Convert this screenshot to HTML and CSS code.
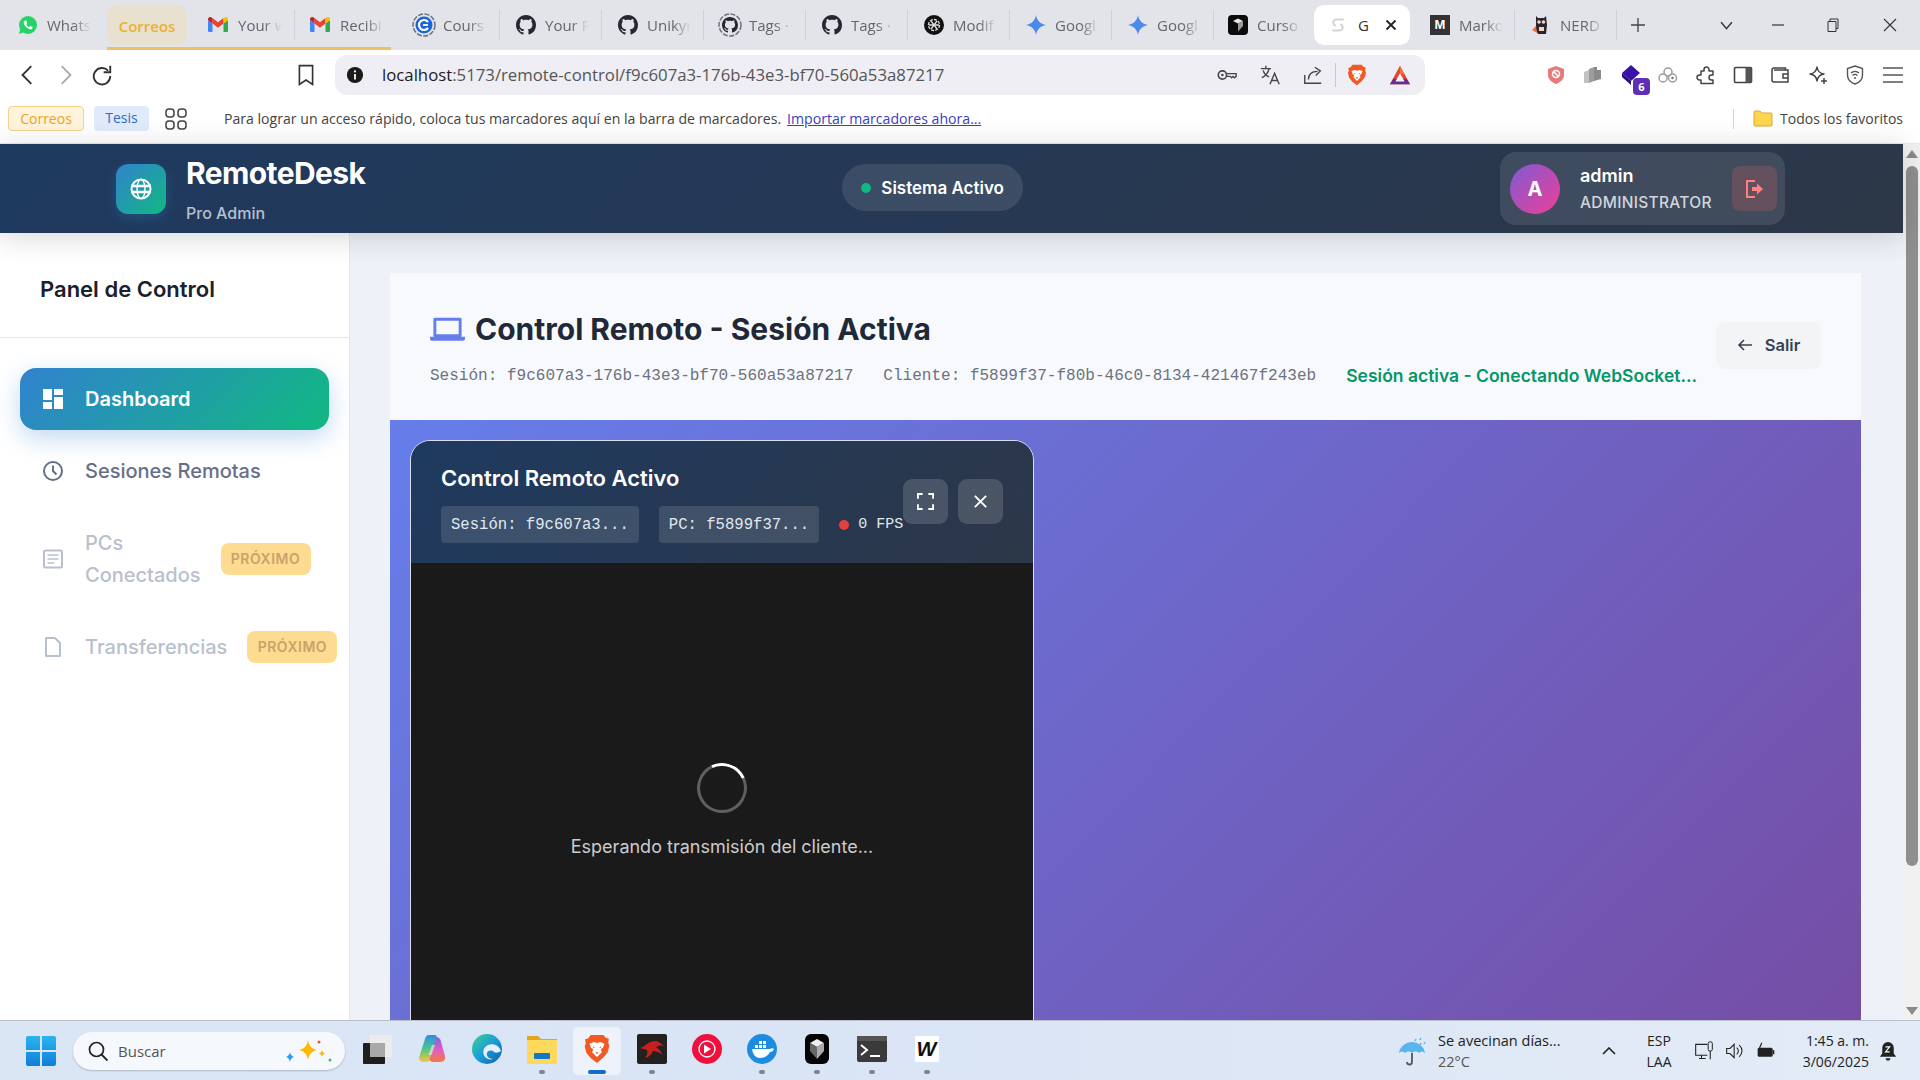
FILE: index.html
```html
<!DOCTYPE html>
<html lang="es">
<head>
  <meta charset="UTF-8" />
  <title>RemoteDesk</title>
  <link rel="stylesheet" href="styles.css">
</head>
<body>
  <svg class="sprite" aria-hidden="true">
    <symbol id="gh" viewBox="0 0 16 16"><path fill="#24292f" d="M8 0C3.58 0 0 3.58 0 8c0 3.54 2.29 6.53 5.47 7.59.4.07.55-.17.55-.38 0-.19-.01-.82-.01-1.49-2.01.37-2.53-.49-2.69-.94-.09-.23-.48-.94-.82-1.13-.28-.15-.68-.52-.01-.53.63-.01 1.08.58 1.23.82.72 1.21 1.87.87 2.33.66.07-.52.28-.87.51-1.07-1.78-.2-3.64-.89-3.64-3.95 0-.87.31-1.59.82-2.15-.08-.2-.36-1.02.08-2.12 0 0 .67-.21 2.2.82.64-.18 1.32-.27 2-.27.68 0 1.36.09 2 .27 1.53-1.04 2.2-.82 2.2-.82.44 1.1.16 1.92.08 2.12.51.56.82 1.27.82 2.15 0 3.07-1.87 3.75-3.65 3.95.29.25.54.73.54 1.48 0 1.07-.01 1.93-.01 2.2 0 .21.15.46.55.38A8.013 8.013 0 0016 8c0-4.42-3.58-8-8-8z"/></symbol>
    <symbol id="gmail" viewBox="0 0 20 16"><path fill="#4285f4" d="M1 15h3.5V6.5L0 3v10.5C0 14.3.5 15 1 15z"/><path fill="#34a853" d="M15.5 15H19c.6 0 1-.7 1-1.5V3l-4.500 3.500z"/><path fill="#ea4335" d="M4.500 6.500 10 10.700l5.500-4.200V1L10 5.200 4.500 1z"/><path fill="#c5221f" d="M0 3l4.500 3.500V1L3 .2C1.500-.5 0 .7 0 2.300z"/><path fill="#fbbc04" d="M15.500 1v5.500L20 3v-.7c0-1.600-1.500-2.800-3-2.100z"/></symbol>
    <symbol id="gemini" viewBox="0 0 20 20"><path fill="#4a8ae8" d="M10 0c.8 5.500 4.500 9.200 10 10-5.500.8-9.200 4.500-10 10-.8-5.500-4.500-9.200-10-10C5.500 9.200 9.200 5.500 10 0z"/></symbol>
    <symbol id="cursor" viewBox="0 0 20 20"><rect width="20" height="20" rx="4" fill="#0b0b0b"/><path fill="#e8e8e8" d="M5 6l5-2.500L15 6l-5 2.500z"/><path fill="#9a9a9a" d="M10 8.500 15 6v5l-5 5.500z"/></symbol>
    <symbol id="brave" viewBox="0 0 24 28"><path fill="#f15a22" d="M6 1h12l2 2.500 3 1-.5 4 1 2.500-1.500 6-4 5L12 27l-6-4.500-4-5-1.500-6 1-2.500-.5-4 3-1z"/><path fill="#fff" d="M5 9l4-1.500 3 1 3-1L19 9l-1.500 4-2 1 1 3L12 21.500 7.500 17l1-3-2-1z"/><path fill="#f15a22" d="M10 12.500l-2-1 .5 1.500zM14 12.500l2-1-.5 1.500zM10.500 17h3L12 19z"/></symbol>
  </svg>

  <div class="tabstrip">
    <div class="tab tab-first">
      <svg class="fav" viewBox="0 0 20 20"><circle cx="10" cy="10" r="9" fill="#25d366"/><path fill="#25d366" d="M1 19l1.500-6 4 4z"/><path fill="#fff" d="M7 5.500c-1 .5-1.500 1.500-1.200 2.800.6 2.500 3.300 5.300 6 6 1.200.3 2.300-.2 2.700-1.200l.2-1-2.300-1.200-1 1.100c-1.200-.4-2.600-1.800-3.100-3.100l.9-.9-1-2.400z"/></svg>
      <span class="tab-text">Whats</span>
    </div>
    <div class="group">
      <div class="group-chip">Correos</div>
      <div class="tab tab-sep tab-group1">
        <svg class="fav" viewBox="0 0 20 20"><use href="#gmail" y="2" width="20" height="16"/></svg>
        <span class="tab-text">Your w</span>
      </div>
      <div class="tab tab-group2">
        <svg class="fav" viewBox="0 0 20 20"><use href="#gmail" y="2" width="20" height="16"/></svg>
        <span class="tab-text">Recibi</span>
      </div>
    </div>
    <div class="tab tab-sep tab-wide">
      <svg class="fav fav-big" viewBox="0 0 24 24"><circle cx="12" cy="12" r="11" fill="none" stroke="#6b7280" stroke-width="1.500" stroke-dasharray="5 1.500"/><circle cx="12" cy="12" r="8.500" fill="#1a66d6"/><path fill="none" stroke="#fff" stroke-width="2.200" d="M16 9a5 5 0 1 0 0 6"/><path stroke="#fff" stroke-width="1.800" d="M11 12h5"/></svg>
      <span class="tab-text">Cours</span>
    </div>
    <div class="tab tab-sep">
      <svg class="fav"><use href="#gh"/></svg>
      <span class="tab-text">Your R</span>
    </div>
    <div class="tab tab-sep">
      <svg class="fav"><use href="#gh"/></svg>
      <span class="tab-text">Unikyr</span>
    </div>
    <div class="tab tab-sep">
      <svg class="fav fav-big" viewBox="0 0 24 24"><circle cx="12" cy="12" r="11" fill="none" stroke="#6b7280" stroke-width="1.500" stroke-dasharray="5 1.500"/><use href="#gh" x="4" y="4" width="16" height="16"/></svg>
      <span class="tab-text">Tags ·</span>
    </div>
    <div class="tab tab-sep">
      <svg class="fav"><use href="#gh"/></svg>
      <span class="tab-text">Tags ·</span>
    </div>
    <div class="tab tab-sep">
      <svg class="fav" viewBox="0 0 20 20"><circle cx="10" cy="10" r="10" fill="#111"/><g fill="none" stroke="#ddd" stroke-width="1.300"><circle cx="10" cy="10" r="5.500" stroke-dasharray="3 1.200"/><path d="M7 6l6 8M13 6l-6 8M5 10h10"/></g></svg>
      <span class="tab-text">Modif</span>
    </div>
    <div class="tab tab-sep">
      <svg class="fav"><use href="#gemini"/></svg>
      <span class="tab-text">Googl</span>
    </div>
    <div class="tab tab-sep">
      <svg class="fav"><use href="#gemini"/></svg>
      <span class="tab-text">Googl</span>
    </div>
    <div class="tab tab-short">
      <svg class="fav"><use href="#cursor"/></svg>
      <span class="tab-text">Curso</span>
    </div>
    <div class="tab-active">
      <svg class="fav" viewBox="0 0 20 20"><g fill="none" stroke="#d4d4d8" stroke-width="2" stroke-linecap="round"><path d="M15 4.500 8 4.500a3 3 0 0 0-2 5l1 1"/><path d="M5 15.500h7a3 3 0 0 0 2-5l-1-1"/></g></svg>
      <span class="tab-active-text">G</span>
      <svg class="tab-close" viewBox="0 0 12 12"><path d="M1.500 1.500l9 9M10.500 1.500l-9 9" stroke="#222" stroke-width="1.800"/></svg>
    </div>
    <div class="tab tab-sep tab-after">
      <span class="fav fav-m">M</span>
      <span class="tab-text">Marko</span>
    </div>
    <div class="tab tab-sep">
      <svg class="fav" viewBox="0 0 20 20"><path fill="#2b2330" d="M5 1l2 2h6l2-2 1 9-1 9H7l-2-4z"/><circle cx="8" cy="7" r="1.800" fill="#ead9c0"/><circle cx="12.500" cy="7" r="1.800" fill="#ead9c0"/><path fill="#e8742c" d="M1 15l4-4 1 7z"/><path fill="#ead9c0" d="M8 12h5v4H8z"/></svg>
      <span class="tab-text">NERD</span>
    </div>
    <svg class="tab-plus" viewBox="0 0 14 14"><path d="M7 0v14M0 7h14" stroke="#444" stroke-width="1.300"/></svg>
    <div class="win-controls">
      <svg viewBox="0 0 12 8" class="win-v"><path d="M1 1l5 6 5-6" fill="none" stroke="#333" stroke-width="1.300"/></svg>
      <svg viewBox="0 0 12 12" class="win-min"><path d="M0 6h12" stroke="#333" stroke-width="1.200"/></svg>
      <svg viewBox="0 0 12 14" class="win-max"><path d="M1 3.500h8v10H1zM3 3.500V1h8v9.500H9" fill="none" stroke="#333"/></svg>
      <svg viewBox="0 0 14 14" class="win-x"><path d="M1 1l12 12M13 1L1 13" stroke="#333" stroke-width="1.100"/></svg>
    </div>
  </div>

  <div class="toolbar">
    <div class="nav-btns">
      <svg class="tool" viewBox="0 0 20 20"><path d="M13 2L5 10l8 8" fill="none" stroke="#333" stroke-width="1.700"/></svg>
      <svg class="tool" viewBox="0 0 20 20"><path d="M7 2l8 8-8 8" fill="none" stroke="#aaa" stroke-width="1.700"/></svg>
      <svg class="tool" viewBox="0 0 20 20"><path d="M15.500 6A7.500 7.500 0 1 0 17.500 11" fill="none" stroke="#333" stroke-width="1.700"/><path d="M17.500 1.500v6h-6" fill="none" stroke="#333" stroke-width="1.700"/></svg>
    </div>
    <svg class="tool tool-mark" viewBox="0 0 20 20"><path d="M4 1.500h12v17l-6-4-6 4z" fill="none" stroke="#333" stroke-width="1.500"/></svg>
    <div class="omnibox">
      <svg class="info" viewBox="0 0 20 20"><circle cx="10" cy="10" r="9" fill="#1a1a1a"/><path d="M10 9v6" stroke="#fff" stroke-width="2"/><circle cx="10" cy="6" r="1.200" fill="#fff"/></svg>
      <span class="url"><b>localhost</b>:5173/remote-control/f9c607a3-176b-43e3-bf70-560a53a87217</span>
      <div class="omni-icons">
        <svg class="tool" viewBox="0 0 24 24"><circle cx="7" cy="12" r="4.500" fill="none" stroke="#444" stroke-width="1.700"/><circle cx="7" cy="12" r="1.400" fill="#444"/><path d="M11.500 10.500H22v3l-2 1.500-1.500-1.500L17 15l-1.500-1.500h-4" fill="none" stroke="#444" stroke-width="1.500"/></svg>
        <svg class="tool" viewBox="0 0 24 24"><g fill="none" stroke="#444" stroke-width="1.500"><path d="M2 5h11M7.500 2v3M11 5c-1 5-4 8-8 10M4.500 7c1 3 3.500 6 6.500 7"/><path d="M12 22l5-12 5 12M13.800 18h6.400"/></g></svg>
        <svg class="tool" viewBox="0 0 24 24"><g fill="none" stroke="#444" stroke-width="1.500"><path d="M3 12v9h18"/><path d="M7 17c0-6 4-9 10-9"/><path d="M14 3.500l6 4-5 5"/></g></svg>
        <span class="omni-sep"></span>
        <svg class="tool" viewBox="0 0 24 28"><use href="#brave"/></svg>
        <svg class="tool tool-bat" viewBox="0 0 24 22"><path d="M12 1L1 21h22z" fill="#e2472f"/><path d="M12 1l5.500 10L12 9z" fill="#f28c3a" opacity=".7"/><path d="M1 21h22l-4-6H5z" fill="#662d91"/><path d="M12 9l5 9H7z" fill="#f4f4f8"/></svg>
      </div>
    </div>
    <div class="ext-icons">
      <svg class="ext" viewBox="0 0 20 20"><path d="M10 1l8 3v6c0 4-3.500 7.500-8 9-4.500-1.500-8-5-8-9V4z" fill="#e87a7a"/><circle cx="10" cy="9" r="3.500" fill="none" stroke="#fff" stroke-width="1.500"/><path d="M7.500 6.500l5 5" stroke="#fff" stroke-width="1.500"/></svg>
      <svg class="ext" viewBox="0 0 20 20"><path fill="#c2c2c2" d="M1 7l5-2v13H1z"/><path fill="#9d9d9d" d="M6 4l5-2v14l-5 2z"/><path fill="#8a8a8a" d="M11 2h3v3h4v9l-7 2z"/></svg>
      <div class="ext-stack">
        <svg class="ext" viewBox="0 0 20 20"><path fill="#3a12a8" d="M10 0l9 8-9 8-9-8z"/><path fill="#2b0d80" d="M1 8l9 8v4L1 12z"/></svg>
        <span class="ext-badge">6</span>
      </div>
      <svg class="ext" viewBox="0 0 20 20"><g fill="none" stroke="#9a9a9a" stroke-width="1.400"><circle cx="10" cy="7" r="4"/><circle cx="5" cy="13" r="4"/><circle cx="14.500" cy="13" r="4"/></g><circle cx="14.500" cy="13" r="1.300" fill="#777"/></svg>
      <svg class="ext" viewBox="0 0 20 20"><path d="M8 4.500a2.500 2.500 0 0 1 5 0V6h4v4h-1.500a2.500 2.500 0 0 0 0 5H17v3.500H5V15H3.500a2.500 2.500 0 0 1 0-5H5V6h3z" fill="none" stroke="#444" stroke-width="1.500" stroke-linejoin="round"/></svg>
      <svg class="ext" viewBox="0 0 20 20"><rect x="1.500" y="2.500" width="17" height="15" rx="1" fill="none" stroke="#444" stroke-width="1.600"/><rect x="12.500" y="2.500" width="6" height="15" fill="#555"/></svg>
      <svg class="ext" viewBox="0 0 20 20"><path d="M15.500 5V3H4a2 2 0 0 0-2 2v10a2 2 0 0 0 2 2h14V5H4" fill="none" stroke="#444" stroke-width="1.500"/><path d="M18 9h-5v4h5" fill="none" stroke="#444" stroke-width="1.500"/></svg>
      <svg class="ext" viewBox="0 0 20 20"><path d="M9 2c.6 4 3 6.500 7 7-4 .6-6.500 3-7 7-.6-4-3-6.500-7-7 4-.6 6.500-3 7-7z" fill="none" stroke="#444" stroke-width="1.500" stroke-linejoin="round"/><path d="M16 13v6M13 16h6" stroke="#444" stroke-width="1.500"/></svg>
      <svg class="ext" viewBox="0 0 20 20"><path d="M10 1l7.500 2.500V10c0 4-3 7.500-7.500 9-4.500-1.500-7.500-5-7.500-9V3.500z" fill="none" stroke="#555" stroke-width="1.400"/><path d="M6 8a6 6 0 0 1 8 0M7.500 10.500a3.500 3.500 0 0 1 5 0" fill="none" stroke="#555" stroke-width="1.300"/><circle cx="10" cy="13" r="1" fill="#555"/></svg>
      <svg class="ext" viewBox="0 0 20 20"><path d="M0 3h20M0 10h20M0 17h20" stroke="#555" stroke-width="1.500"/></svg>
    </div>
  </div>

  <div class="bookmarks">
    <span class="bm-chip bm-orange">Correos</span>
    <span class="bm-chip bm-blue">Tesis</span>
    <svg class="bm-grid" viewBox="0 0 22 22"><g fill="none" stroke="#444" stroke-width="1.500"><rect x="1" y="1" width="8" height="8" rx="3"/><rect x="13" y="1" width="8" height="8" rx="3"/><rect x="1" y="13" width="8" height="8" rx="3"/><rect x="13" y="13" width="8" height="8" rx="3"/></g></svg>
    <span class="bm-msg">Para lograr un acceso rápido, coloca tus marcadores aquí en la barra de marcadores.</span>
    <a class="bm-link">Importar marcadores ahora...</a>
    <span class="bm-sep"></span>
    <svg class="bm-folder" viewBox="0 0 20 17"><path d="M1 2a1 1 0 0 1 1-1h5l2 2h9a1 1 0 0 1 1 1v11a1 1 0 0 1-1 1H2a1 1 0 0 1-1-1z" fill="#ffd44f" stroke="#d9a93a"/></svg>
    <span class="bm-all">Todos los favoritos</span>
  </div>

  <div class="app">
    <div class="page">
      <header class="topbar">
        <div class="brand">
          <div class="brand-logo">
            <svg viewBox="0 0 22 22"><circle cx="11" cy="11" r="9.500" fill="none" stroke="#fff" stroke-width="2"/><ellipse cx="11" cy="11" rx="4" ry="9.500" fill="none" stroke="#fff" stroke-width="1.400"/><path d="M1.500 8h19M1.500 14h19" stroke="#fff" stroke-width="2.500"/></svg>
          </div>
          <div>
            <div class="brand-name">RemoteDesk</div>
            <div class="brand-sub">Pro Admin</div>
          </div>
        </div>
        <div class="status-pill"><span class="status-dot"></span>Sistema Activo</div>
        <div class="userbox">
          <div class="avatar">A</div>
          <div>
            <div class="user-name">admin</div>
            <div class="user-role">ADMINISTRATOR</div>
          </div>
          <div class="logout">
            <svg viewBox="0 0 20 22"><path d="M11 3H3v16h8" fill="none" stroke="#fc8181" stroke-width="2"/><path d="M8 9h5V5.500l6 5.500-6 5.500V13H8z" fill="#fc8181"/></svg>
          </div>
        </div>
      </header>

      <div class="body-row">
        <aside class="sidebar">
          <h2 class="side-title">Panel de Control</h2>
          <nav class="side-nav">
            <a class="nav-item nav-active">
              <svg class="nav-icon" viewBox="0 0 20 20"><path fill="#fff" d="M0 0h9v11H0zM11 0h9v6h-9zM11 8h9v12h-9zM0 13h9v7H0z"/></svg>
              <span>Dashboard</span>
            </a>
            <a class="nav-item">
              <svg class="nav-icon" viewBox="0 0 20 20"><circle cx="10" cy="10" r="9" fill="none" stroke="currentColor" stroke-width="2"/><path d="M10 4.500V10l3.500 3.500" fill="none" stroke="currentColor" stroke-width="2"/></svg>
              <span>Sesiones Remotas</span>
            </a>
            <a class="nav-item nav-off">
              <svg class="nav-icon" viewBox="0 0 20 20"><rect x="1" y="1.500" width="18" height="17" rx="1.500" fill="none" stroke="currentColor" stroke-width="2"/><path d="M4.500 6h11M4.500 10h11M4.500 14h7" stroke="currentColor" stroke-width="1.600"/></svg>
              <span>PCs Conectados</span>
              <em class="soon">PRÓXIMO</em>
            </a>
            <a class="nav-item nav-off">
              <svg class="nav-icon" viewBox="0 0 20 20"><path d="M3 1h9l5 5v13H3z" fill="none" stroke="currentColor" stroke-width="2" stroke-linejoin="round"/></svg>
              <span>Transferencias</span>
              <em class="soon">PRÓXIMO</em>
            </a>
          </nav>
        </aside>

        <main class="main">
          <section class="card">
            <div class="card-head">
              <div>
                <h1 class="card-title">
                  <svg class="laptop" viewBox="0 0 36 24"><path d="M5 2h26v17H5z" fill="none" stroke="#667eea" stroke-width="3" stroke-linejoin="round"/><path d="M0 20h36v2a2 2 0 0 1-2 2H2a2 2 0 0 1-2-2z" fill="#667eea"/></svg>
                  Control Remoto - Sesión Activa
                </h1>
                <div class="card-meta">
                  <span class="mono">Sesión: f9c607a3-176b-43e3-bf70-560a53a87217</span>
                  <span class="mono">Cliente: f5899f37-f80b-46c0-8134-421467f243eb</span>
                  <span class="meta-ok">Sesión activa - Conectando WebSocket...</span>
                </div>
              </div>
              <button class="exit-btn">
                <svg viewBox="0 0 16 16"><path d="M15 8H2M7 3L2 8l5 5" fill="none" stroke="#374151" stroke-width="1.600"/></svg>
                Salir
              </button>
            </div>

            <div class="stage">
              <div class="viewer">
                <div class="viewer-head">
                  <div>
                    <h3 class="viewer-title">Control Remoto Activo</h3>
                    <div class="viewer-info">
                      <span class="chip">Sesión: f9c607a3...</span>
                      <span class="chip">PC: f5899f37...</span>
                      <span class="fps"><i class="fps-dot"></i>0 FPS</span>
                    </div>
                  </div>
                  <div class="viewer-btns">
                    <button class="icon-btn"><svg viewBox="0 0 18 18"><path d="M1 6V1h5M12 1h5v5M17 12v5h-5M6 17H1v-5" fill="none" stroke="#fff" stroke-width="2"/></svg></button>
                    <button class="icon-btn"><svg viewBox="0 0 18 18"><path d="M3 3l12 12M15 3L3 15" stroke="#fff" stroke-width="2"/></svg></button>
                  </div>
                </div>
                <div class="viewer-body">
                  <div class="spinner"></div>
                  <p class="wait">Esperando transmisión del cliente...</p>
                </div>
              </div>
            </div>
          </section>
        </main>
      </div>
    </div>

    <div class="scrollbar">
      <span class="arrow-up"></span>
      <span class="thumb"></span>
      <span class="arrow-down"></span>
    </div>
  </div>

  <footer class="taskbar">
    <svg class="win-logo" viewBox="0 0 30 30"><defs><linearGradient id="winl" x1="0" y1="0" x2="0" y2="1"><stop offset="0" stop-color="#2ab4f0"/><stop offset="1" stop-color="#0f7fd8"/></linearGradient></defs><path fill="url(#winl)" d="M0 2a2 2 0 0 1 2-2h12v14H0zM16 0h12a2 2 0 0 1 2 2v12H16zM0 16h14v14H2a2 2 0 0 1-2-2zM16 16h14v12a2 2 0 0 1-2 2H16z"/></svg>
    <div class="search">
      <svg viewBox="0 0 20 20" class="search-ico"><circle cx="8.500" cy="8.500" r="7" fill="none" stroke="#222" stroke-width="1.700"/><path d="M13.500 13.500l6 6" stroke="#222" stroke-width="1.900"/></svg>
      <span class="search-text">Buscar</span>
      <svg class="search-spark" viewBox="0 0 50 26"><path fill="#ffb900" d="M25 2c1 6 4 9 9 10-5 1-8 4-9 10-1-6-4-9-9-10 5-1 8-4 9-10z"/><path fill="#2b9af3" d="M7 14c.5 3 2 4 4 5-2 .5-3.500 2-4 5-.5-3-2-4.500-4-5 2-1 3.500-2 4-5z"/><path fill="#ffb900" d="M39 12c.4 2 1.500 3 3 3.500-1.500.5-2.600 1.500-3 3.500-.4-2-1.500-3-3-3.500 1.500-.5 2.600-1.500 3-3.500z"/><circle cx="36" cy="4" r="1.500" fill="#e8552d"/><circle cx="47" cy="22" r="1.500" fill="#5db04c"/></svg>
    </div>
    <div class="task-apps">
      <div class="app-slot">
        <svg class="app-ico" viewBox="0 0 30 30"><rect x="8" y="1" width="22" height="22" fill="#ececec"/><rect x="1" y="9" width="22" height="21" rx="1" fill="#1e1e1e"/><rect x="8" y="9" width="15" height="14" fill="#a9a9a9"/></svg>
      </div>
      <div class="app-slot">
        <svg class="app-ico" viewBox="0 0 30 30"><defs><linearGradient id="copa" x1="0" y1="0" x2="0" y2="1"><stop offset="0" stop-color="#2a8fe8"/><stop offset=".5" stop-color="#4fc48a"/><stop offset="1" stop-color="#f5c63c"/></linearGradient><linearGradient id="copb" x1="0" y1="0" x2="0" y2="1"><stop offset="0" stop-color="#8a5ce6"/><stop offset=".55" stop-color="#e35fc0"/><stop offset="1" stop-color="#f47a3c"/></linearGradient></defs><path fill="url(#copa)" d="M12 1h6c1.500 0 2 1.500 1.500 3L14 24c-.6 2-2 4-4.500 4H7c-4 0-5.500-3-4.500-6L8 5c.6-2.500 2-4 4-4z"/><path fill="url(#copb)" d="M19 3c2 0 3.500 1 4.500 3L28 22c.8 3-1 6-5 6h-7c-2 0-3-1-3.500-2.500L18 8c.5-2 1-3.500 1-5z"/><path fill="#fff" opacity=".5" d="M15 11h3l-3.500 10h-3z"/></svg>
      </div>
      <div class="app-slot">
        <svg class="app-ico" viewBox="0 0 30 30"><defs><linearGradient id="edg" x1="0" y1="0" x2="1" y2="1"><stop offset="0" stop-color="#3bd28a"/><stop offset=".5" stop-color="#1b9ddb"/><stop offset="1" stop-color="#0b5fa8"/></linearGradient></defs><circle cx="15" cy="15" r="15" fill="url(#edg)"/><path fill="#e4f1fa" d="M29 17c-2-6-8-8-13-6-5 2-6 8-3 12 2 2 5 3 8 2-4 0-7-3-6-6 1-3 5-3 7-1 2 1 4 1 7-1z"/></svg>
      </div>
      <div class="app-slot app-dot">
        <svg class="app-ico" viewBox="0 0 30 30"><path fill="#e3a51c" d="M0 2h11l3 3h16v6H0z"/><rect y="6" width="30" height="24" fill="#ffd95e"/><rect x="7" y="19" width="16" height="6" rx="1" fill="#1479c9"/></svg>
      </div>
      <div class="app-slot app-on">
        <svg class="app-ico"><use href="#brave" width="30" height="30"/></svg>
      </div>
      <div class="app-slot app-dot">
        <svg class="app-ico" viewBox="0 0 30 30"><rect width="30" height="30" rx="2" fill="#242020"/><path fill="#c4201c" d="M3 14c5-1 8-7 15-7 3 0 6 2 9 5-4-1-6 0-8 1 3 2 5 4 6 8-3-3-6-4-9-4-1 3-4 6-8 7 2-3 3-5 2-8-2-1-5-1-7-2z"/></svg>
      </div>
      <div class="app-slot">
        <svg class="app-ico" viewBox="0 0 30 30"><circle cx="15" cy="15" r="15" fill="#f0103e"/><circle cx="15" cy="15" r="8" fill="none" stroke="#fff" stroke-width="1.300"/><path fill="#fff" d="M12 10.500l7 4.500-7 4.500z"/></svg>
      </div>
      <div class="app-slot app-dot">
        <svg class="app-ico" viewBox="0 0 30 30"><circle cx="15" cy="15" r="15" fill="#1d8ce0"/><path fill="#fff" d="M5 15h18c1-1 3-1 4 0-1 2-2 3-4 3-2 4-6 6-10 6-4 0-7-3-8-9z"/><path fill="#fff" d="M8 11h3v3H8zM12 11h3v3h-3zM16 11h3v3h-3zM12 7h3v3h-3zM16 7h3v3h-3z"/></svg>
      </div>
      <div class="app-slot app-dot">
        <svg class="app-ico" viewBox="0 0 30 30"><rect x="3" width="24" height="30" rx="6" fill="#050505"/><path fill="#eee" d="M8 9l7-4 7 4-7 4z"/><path fill="#aaa" d="M15 13l7-4v8l-7 8z"/><path fill="#666" d="M8 9l7 4v12l-7-8z"/></svg>
      </div>
      <div class="app-slot app-dot">
        <svg class="app-ico" viewBox="0 0 30 26"><rect width="30" height="26" rx="2" fill="#3a3a3a"/><rect width="30" height="5" fill="#555"/><path d="M4 9l6 5-6 5" fill="none" stroke="#fff" stroke-width="2"/><path d="M13 20h10" stroke="#fff" stroke-width="2"/></svg>
      </div>
      <div class="app-slot app-dot">
        <span class="app-w">W</span>
      </div>
    </div>
    <div class="tray">
      <svg class="tray-rain" viewBox="0 0 30 30"><path fill="#5cb4ee" d="M1 17c1-7 7-11 13-11s12 4 13 11c-2-2-4-2-6 0-2-2-5-2-7 0-2-2-5-2-7 0-2-2-4-2-6 0z"/><path d="M14 17v9a2.500 2.500 0 0 1-5 0" fill="none" stroke="#555" stroke-width="1.800"/><path d="M18 3l-1 2M23 2l-1 2M27 6l-1 2M23 7l-1 2" stroke="#5cb4ee" stroke-width="1.500"/></svg>
      <div class="weather">
        <div>Se avecinan días...</div>
        <div class="weather-temp">22°C</div>
      </div>
      <svg class="tray-up" viewBox="0 0 14 8"><path d="M1 7l6-6 6 6" fill="none" stroke="#222" stroke-width="1.600"/></svg>
      <div class="lang">ESP<br>LAA</div>
      <svg class="tray-ico" viewBox="0 0 24 24"><path d="M16 4H2v13h14M6 21h8M9 17v4" fill="none" stroke="#222" stroke-width="1.300"/><rect x="17" y="1" width="5" height="11" rx="2" fill="none" stroke="#222" stroke-width="1.200"/><path d="M19.500 12v10" stroke="#222" stroke-width="1.300"/></svg>
      <svg class="tray-ico" viewBox="0 0 24 24"><path d="M2 9h4l5-5v16l-5-5H2z" fill="none" stroke="#222" stroke-width="1.300"/><path d="M14 8a5 5 0 0 1 0 8M17 5a9 9 0 0 1 0 14" fill="none" stroke="#222" stroke-width="1.300"/></svg>
      <svg class="tray-ico" viewBox="0 0 24 24"><rect x="2" y="8" width="18" height="11" rx="2" fill="#222"/><rect x="20" y="11" width="2" height="5" fill="#222"/><path d="M7 2L4 9h4l-2 6" fill="none" stroke="#222" stroke-width="1.400"/></svg>
      <div class="clock">
        <div>1:45 a. m.</div>
        <div>3/06/2025</div>
      </div>
      <svg class="tray-bell" viewBox="0 0 22 26"><path fill="#222" d="M11 2a7 7 0 0 1 7 7v7l3 4H1l3-4V9a7 7 0 0 1 7-7zM8 22h6a3 3 0 0 1-6 0z"/><path d="M8 8h5l-5 6h5" fill="none" stroke="#fff" stroke-width="1.400"/></svg>
    </div>
  </footer>
</body>
</html>
```
FILE: styles.css
```css
* {
  box-sizing: border-box;
}

html,
body {
  margin: 0;
  height: 100%;
  overflow: hidden;
}

body {
  display: flex;
  flex-direction: column;
  font-family: Inter, "Noto Sans", sans-serif;
  background: #fff;
}

.sprite {
  width: 0;
  height: 0;
  flex: none;
}

/* browser chrome */

.tabstrip {
  height: 50px;
  flex: none;
  display: flex;
  background: #e3e3ea;
  font-family: "Open Sans", sans-serif;
  font-size: 15px;
  color: #666;
}

.tab {
  width: 98px;
  margin-right: 4px;
  height: 30px;
  margin-top: 10px;
  display: flex;
  align-items: center;
  gap: 9px;
  padding-left: 12px;
  flex: none;
}

.tab-first {
  width: 107px;
  margin-right: 0;
  padding-left: 18px;
}

.tab-sep {
  border-right: 1px solid #cfcfd6;
}

.tab-wide {
  margin-left: 11px;
}

.tab-short {
  width: 96px;
  margin-right: 0;
  padding-left: 10px;
}

.fav {
  width: 20px;
  height: 20px;
  flex: none;
}

.fav-big {
  width: 24px;
  height: 24px;
  margin-left: -2px;
  margin-right: -2px;
}

.fav-m {
  background: #333;
  color: #fff;
  font: 700 13px/20px "Liberation Sans", sans-serif;
  text-align: center;
}

/* the title fades out instead of being clipped, as tabs do when they are narrow */
.tab-text {
  width: 54px;
  white-space: nowrap;
  -webkit-mask-image: linear-gradient(90deg, #000 26px, transparent 44px);
  mask-image: linear-gradient(90deg, #000 26px, transparent 44px);
}

.group {
  display: flex;
  align-items: flex-start;
  border-bottom: 3px solid #eebf63;
  height: 50px;
  width: 284px;
}

.group-chip {
  width: 81px;
  height: 40px;
  margin-top: 5px;
  background: #e9e1d0;
  border-radius: 10px;
  color: #eeb02e;
  font-weight: 600;
  font-size: 15px;
  line-height: 42px;
  text-align: center;
  margin-right: 21px;
}

.tab-group1,
.tab-group2 {
  margin-right: 0;
  padding-left: 0;
  gap: 10px;
  margin-top: 10px;
}

.tab-group1 {
  width: 87px;
}

.tab-group2 {
  padding-left: 15px;
  width: 96px;
}

.tab-active {
  width: 96px;
  height: 40px;
  margin-top: 5px;
  background: #fff;
  border-radius: 10px;
  display: flex;
  align-items: center;
  padding-left: 14px;
  flex: none;
  color: #333;
  margin-right: 20px;
}

.tab-active-text {
  margin-left: 10px;
}

.tab-close {
  width: 12px;
  height: 12px;
  margin-left: 16px;
}

.tab-after {
  width: 85px;
  margin-right: 4px;
  padding-left: 0;
}

.tab-plus {
  width: 14px;
  height: 14px;
  margin: 18px 0 0 10px;
  flex: none;
}

.win-controls {
  display: flex;
  align-items: center;
  margin-left: auto;
  height: 50px;
  padding-right: 23px;
}

.win-v {
  width: 13px;
  height: 9px;
}

.win-min {
  width: 12px;
  height: 12px;
  margin-left: 39px;
}

.win-max {
  width: 12px;
  height: 14px;
  margin-left: 43px;
}

.win-x {
  width: 14px;
  height: 14px;
  margin-left: 44px;
}

.toolbar {
  height: 50px;
  flex: none;
  display: flex;
  align-items: center;
  background: #fff;
  padding-left: 17px;
}

.nav-btns {
  display: flex;
  gap: 15px;
}

.tool {
  width: 22px;
  height: 22px;
  flex: none;
}

.tool-mark {
  margin-left: 182px;
  margin-right: 18px;
}

.omnibox {
  width: 1090px;
  height: 40px;
  flex: none;
  background: #eeeef4;
  border-radius: 12px;
  display: flex;
  align-items: center;
  padding-left: 11px;
  font-family: "Open Sans", sans-serif;
}

.info {
  width: 18px;
  height: 18px;
  flex: none;
}

.url {
  margin: -2px 0 0 18px;
  font-size: 16.750px;
  color: #555;
  white-space: nowrap;
}

.url b {
  font-weight: 400;
  color: #1c1c1c;
}

.omni-icons {
  margin-left: auto;
  display: flex;
  align-items: center;
  padding-right: 14px;
  gap: 21px;
}

.omni-sep {
  width: 1px;
  height: 24px;
  background: #c8c8ce;
  margin: 0 -10.500px;
}

.ext-icons {
  display: flex;
  align-items: center;
  gap: 17.400px;
  margin-left: 121px;
}

.ext {
  width: 20px;
  height: 20px;
  display: block;
  flex: none;
}

.ext-stack {
  position: relative;
}

.ext-badge {
  position: absolute;
  right: -9px;
  bottom: -10px;
  width: 17px;
  height: 17px;
  border-radius: 4px;
  background: #5f2eb5;
  color: #fff;
  font: 700 11px/17px "Open Sans", sans-serif;
  text-align: center;
}

.bookmarks {
  height: 44px;
  flex: none;
  display: flex;
  align-items: center;
  background: #fff;
  border-bottom: 1px solid #e8e8e8;
  padding: 0 0 6px 8px;
  font-family: "Open Sans", sans-serif;
  font-size: 14.100px;
  color: #444;
}

.bm-chip {
  height: 25px;
  line-height: 23px;
  text-align: center;
  border-radius: 4px;
  font-size: 14px;
}

.bm-orange {
  width: 76px;
  background: #fff3dc;
  border: 1px solid #f3d28d;
  color: #e9a526;
}

.bm-blue {
  width: 55px;
  margin-left: 10px;
  background: #dfeafb;
  color: #2c6fc4;
}

.bm-grid {
  width: 22px;
  height: 22px;
  margin-left: 16px;
}

.bm-msg {
  margin-left: 37px;
  white-space: nowrap;
}

.bm-link {
  margin-left: 6px;
  color: #3b3fc4;
  text-decoration: underline;
  white-space: nowrap;
}

.bm-sep {
  width: 1px;
  height: 20px;
  background: #d5d5d5;
  margin-left: auto;
}

.bm-folder {
  width: 20px;
  height: 17px;
  margin-left: 19px;
}

.bm-all {
  margin-left: 7px;
  margin-right: 17px;
  font-size: 14px;
  white-space: nowrap;
}

/* app */

.app {
  flex: 1;
  min-height: 0;
  display: flex;
}

.page {
  flex: 1;
  min-width: 0;
  display: flex;
  flex-direction: column;
}

.topbar {
  height: 89px;
  flex: none;
  display: flex;
  align-items: center;
  justify-content: space-between;
  padding: 0 118px 0 116px;
  background: linear-gradient(135deg, #1e3a5f, #2d3748);
  box-shadow: 0 4px 30px rgba(0, 0, 0, 0.16);
  position: relative;
  color: #fff;
}

.brand {
  display: flex;
  align-items: center;
  gap: 20px;
}

.brand-logo {
  width: 50px;
  height: 50px;
  border-radius: 12px;
  background: linear-gradient(135deg, #3182ce, #10b981);
  display: flex;
  align-items: center;
  justify-content: center;
  box-shadow: 0 4px 12px rgba(49, 130, 206, 0.3);
}

.brand-logo svg {
  width: 22px;
  height: 22px;
}

.brand-name {
  font-size: 30px;
  font-weight: 700;
  line-height: 42px;
  letter-spacing: -0.6px;
  margin-top: -2px;
}

.brand-sub {
  font-size: 16px;
  font-weight: 500;
  line-height: 22px;
  margin-top: 8px;
  color: #b7c0cf;
}

.status-pill {
  width: 181px;
  height: 47px;
  margin-top: -2px;
  border-radius: 24px;
  background: rgba(255, 255, 255, 0.1);
  display: flex;
  align-items: center;
  justify-content: center;
  gap: 10px;
  font-size: 17px;
  font-weight: 600;
}

.status-dot {
  width: 10px;
  height: 10px;
  border-radius: 50%;
  background: #10b981;
}

.userbox {
  width: 285px;
  height: 73px;
  border-radius: 16px;
  background: rgba(255, 255, 255, 0.1);
  display: flex;
  align-items: center;
  padding: 0 9px 0 10px;
  gap: 20px;
}

.avatar {
  width: 50px;
  height: 50px;
  border-radius: 50%;
  background: linear-gradient(135deg, #805ad5, #ed3f96);
  text-align: center;
  font-size: 20px;
  font-weight: 700;
  line-height: 50px;
  flex: none;
}

.user-name {
  font-size: 18px;
  font-weight: 600;
  line-height: 27px;
}

.user-role {
  font-size: 15.500px;
  font-weight: 500;
  line-height: 27px;
  letter-spacing: 0.3px;
  color: #d0d5dd;
}

.logout {
  width: 45px;
  height: 45px;
  border-radius: 8px;
  margin-left: auto;
  background: rgba(245, 101, 101, 0.2);
  display: flex;
  align-items: center;
  justify-content: center;
  flex: none;
}

.logout svg {
  width: 20px;
  height: 22px;
}

.body-row {
  flex: 1;
  min-height: 0;
  display: flex;
}

.sidebar {
  width: 350px;
  flex: none;
  background: #fff;
  border-right: 1px solid #e2e8f0;
}

.side-title {
  margin: 0;
  height: 105px;
  padding: 7px 40px 0;
  border-bottom: 1px solid #e2e8f0;
  display: flex;
  align-items: center;
  font-size: 22px;
  font-weight: 600;
  color: #1a202c;
}

.side-nav {
  display: flex;
  flex-direction: column;
  gap: 10px;
  padding: 30px 20px 0;
}

.nav-item {
  display: flex;
  align-items: center;
  gap: 22px;
  padding: 15px 23px;
  border-radius: 16px;
  font-size: 20px;
  font-weight: 500;
  line-height: 32px;
  color: #64708a;
}

.nav-active {
  background: linear-gradient(135deg, #3182ce, #10b981);
  box-shadow: 0 8px 25px rgba(49, 130, 206, 0.3);
  color: #fff;
  font-weight: 600;
}

.nav-off {
  color: #b9c0cd;
}

.nav-icon {
  width: 20px;
  height: 20px;
  flex: none;
}

.soon {
  flex: none;
  width: 90px;
  height: 32px;
  border-radius: 8px;
  background: #fddc91;
  color: #c8a36a;
  font-size: 14px;
  font-style: normal;
  font-weight: 600;
  letter-spacing: 0.5px;
  line-height: 32px;
  text-align: center;
  margin-left: -2px;
}

.main {
  flex: 1;
  min-width: 0;
  overflow: hidden;
  background: #eef2f8;
  padding: 40px 42px 0 40px;
}

.card {
  display: flex;
  flex-direction: column;
}

.card-head {
  height: 147px;
  background: #f8f9fd;
  display: flex;
  align-items: center;
  justify-content: space-between;
  padding: 0 40px 0 40px;
}

.card-title {
  margin: 0;
  display: flex;
  align-items: center;
  gap: 10px;
  font-size: 30px;
  font-weight: 700;
  line-height: 42px;
  color: #1f2937;
}

.laptop {
  width: 35px;
  height: 24px;
}

.card-meta {
  display: flex;
  align-items: center;
  gap: 30px;
  margin-top: 17px;
}

.mono {
  font-family: "Liberation Mono", monospace;
  font-size: 16.050px;
  color: #6b7280;
  white-space: nowrap;
}

.meta-ok {
  font-size: 17.500px;
  font-weight: 600;
  color: #059669;
  white-space: nowrap;
  margin-top: -2px;
}

.exit-btn {
  width: 105px;
  height: 47px;
  margin-top: -3px;
  flex: none;
  border: 0;
  border-radius: 8px;
  background: #f3f4f6;
  display: flex;
  align-items: center;
  justify-content: center;
  gap: 12px;
  font: 600 16.500px Inter, sans-serif;
  color: #374151;
}

.exit-btn svg {
  width: 16px;
  height: 16px;
}

.stage {
  background: linear-gradient(135deg, #667eea, #764ba2);
  padding: 20px;
  height: 700px;
}

.viewer {
  width: 624px;
  height: 620px;
  border: 1px solid #d9dcf3;
  border-radius: 20px;
  overflow: hidden;
  display: flex;
  flex-direction: column;
}

.viewer-head {
  height: 122px;
  flex: none;
  display: flex;
  align-items: center;
  justify-content: space-between;
  padding: 1px 32px 0 30px;
  background: linear-gradient(135deg, #1e3a5f, #2d3748);
  color: #fff;
}

.viewer-title {
  margin: 0;
  font-size: 22px;
  font-weight: 600;
  line-height: 33px;
}

.viewer-info {
  display: flex;
  align-items: center;
  gap: 20px;
  margin-top: 11px;
  font-family: "Liberation Mono", monospace;
  font-size: 15.600px;
  white-space: nowrap;
}

.chip {
  height: 37px;
  line-height: 39px;
  padding: 0 10px;
  border-radius: 4px;
  background: rgba(255, 255, 255, 0.12);
  color: #e2e8f0;
}

.fps {
  display: flex;
  align-items: center;
  gap: 9px;
  font-size: 15px;
  color: #e2e8f0;
}

.fps-dot {
  width: 10px;
  height: 10px;
  border-radius: 50%;
  background: #e53e3e;
}

.viewer-btns {
  display: flex;
  gap: 10px;
  flex: none;
  margin-top: -3px;
}

.icon-btn {
  width: 45px;
  height: 45px;
  padding: 0;
  border: 0;
  border-radius: 9px;
  background: rgba(255, 255, 255, 0.15);
  display: flex;
  align-items: center;
  justify-content: center;
}

.icon-btn svg {
  width: 17px;
  height: 17px;
}

.viewer-body {
  flex: 1;
  background: #1a1a1a;
  display: flex;
  flex-direction: column;
  align-items: center;
  justify-content: center;
}

.spinner {
  width: 50px;
  height: 50px;
  border-radius: 50%;
  border: 3px solid rgba(255, 255, 255, 0.3);
  border-top-color: #fff;
  transform: rotate(20deg);
}

.wait {
  margin: 20px 0 0;
  font-size: 18px;
  line-height: 27px;
  color: #ccc;
}

.scrollbar {
  width: 17px;
  flex: none;
  background: #f1f1f1;
  display: flex;
  flex-direction: column;
  align-items: center;
}

.arrow-up,
.arrow-down {
  width: 0;
  height: 0;
  border-left: 6px solid transparent;
  border-right: 6px solid transparent;
}

.arrow-up {
  margin-top: 6px;
  border-bottom: 8px solid #8a8a8a;
}

.arrow-down {
  margin-top: auto;
  margin-bottom: 5px;
  border-top: 8px solid #8a8a8a;
}

.thumb {
  width: 12px;
  height: 700px;
  margin-top: 8px;
  border-radius: 6px;
  background: #8f8f8f;
}

/* windows taskbar */

.taskbar {
  height: 60px;
  flex: none;
  display: flex;
  align-items: center;
  border-top: 1px solid #b9c0cc;
  background: linear-gradient(90deg, #dbe6f5, #d9e4f5 40%, #e3ebf6);
  font-family: "Open Sans", sans-serif;
  color: #222;
  padding-left: 26px;
}

.win-logo {
  width: 30px;
  height: 30px;
  flex: none;
}

.search {
  width: 272px;
  height: 38px;
  margin-left: 17px;
  flex: none;
  border-radius: 19px;
  background: #f5f8fd;
  box-shadow: 0 1px 2px rgba(0, 0, 0, 0.2);
  display: flex;
  align-items: center;
  padding-left: 15px;
}

.search-ico {
  width: 20px;
  height: 20px;
}

.search-text {
  margin-left: 10px;
  font-size: 15px;
  color: #555;
}

.search-spark {
  width: 50px;
  height: 26px;
  margin-left: auto;
  margin-right: 12px;
}

.task-apps {
  display: flex;
  margin-left: 4px;
}

.app-slot {
  width: 55px;
  height: 48px;
  display: flex;
  align-items: center;
  justify-content: center;
  padding-bottom: 4px;
  position: relative;
}

.app-ico {
  width: 30px;
  height: 30px;
}

.app-dot::after,
.app-on::after {
  content: "";
  position: absolute;
  left: 50%;
  bottom: 1px;
  width: 6px;
  height: 4px;
  margin-left: -3px;
  border-radius: 2px;
  background: #7d8590;
}

.app-on {
  background: #edf2fb;
  border-radius: 5px;
  width: 48px;
  margin: 0 3.500px;
}

.app-on::after {
  width: 18px;
  margin-left: -9px;
  background: #0f6cd1;
}

.app-w {
  width: 24px;
  height: 26px;
  background: #fff;
  color: #111;
  font: italic 900 21px/26px "Liberation Sans", sans-serif;
  text-align: center;
}

.tray {
  margin-left: auto;
  display: flex;
  align-items: center;
  font-size: 14px;
  padding-right: 23px;
}

.tray-rain {
  width: 30px;
  height: 30px;
}

.weather {
  margin-left: 10px;
  width: 150px;
  font-size: 14.500px;
  line-height: 21px;
  white-space: nowrap;
}

.weather-temp {
  color: #555;
}

.tray-up {
  width: 14px;
  height: 8px;
  margin-left: 14px;
}

.lang {
  margin: 0 4px 0 23px;
  width: 40px;
  text-align: center;
  line-height: 21px;
}

.tray-ico {
  width: 20px;
  height: 20px;
  margin-left: 11px;
}

.clock {
  width: 85px;
  margin-left: 8px;
  text-align: right;
  line-height: 21px;
  white-space: nowrap;
}

.tray-bell {
  width: 18px;
  height: 22px;
  margin-left: 10px;
}
```
